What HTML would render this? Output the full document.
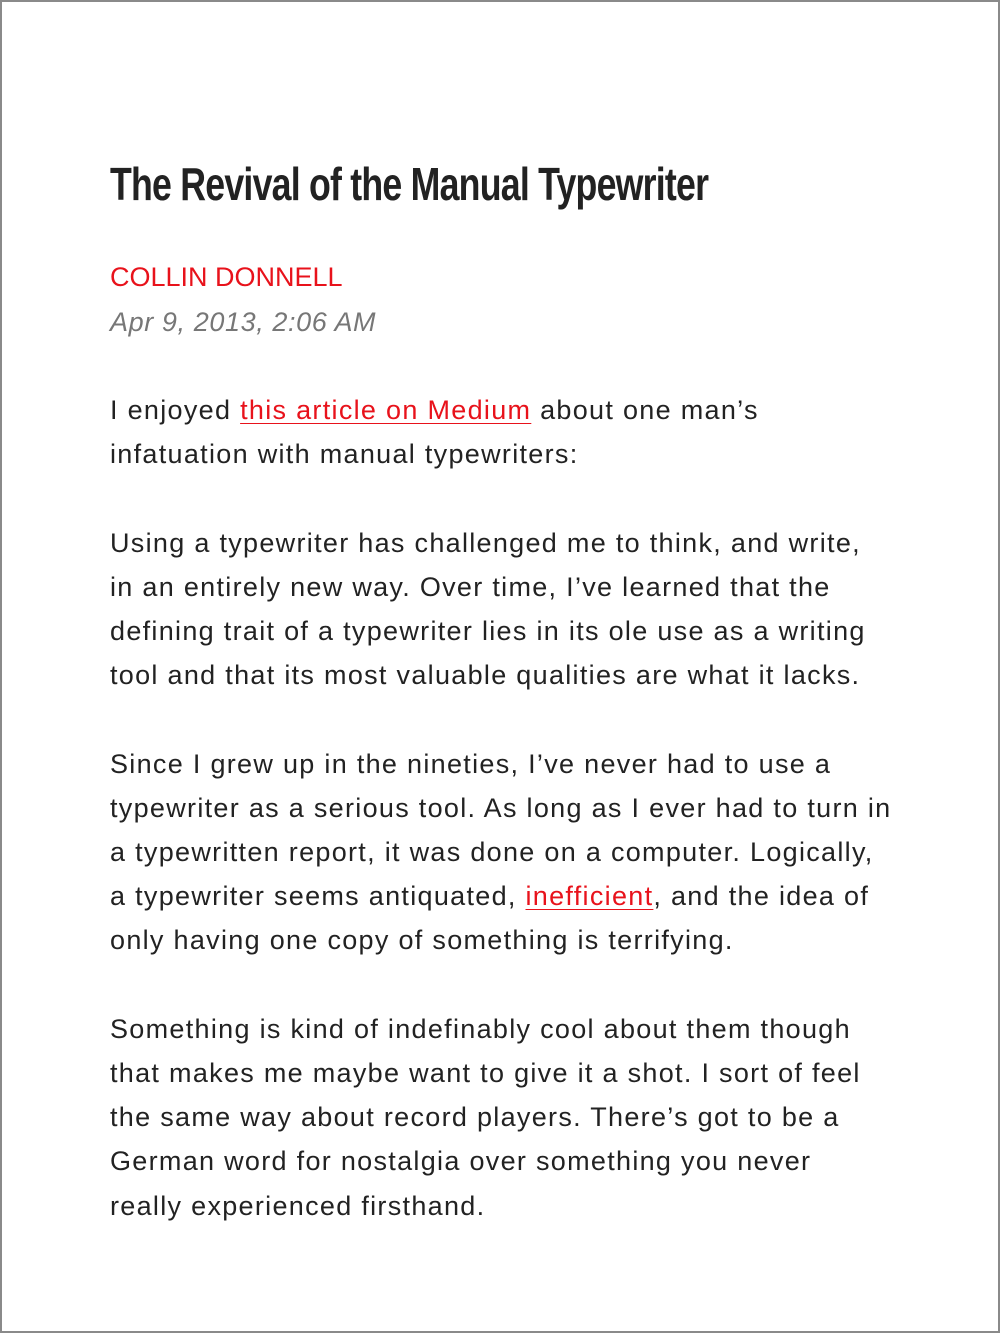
<!DOCTYPE html>
<html><head><meta charset="utf-8"><style>
html,body{margin:0;padding:0;background:#fff}
body{width:1000px;height:1333px;position:relative;overflow:hidden}
.frame{position:absolute;left:0;top:0;width:996px;height:1329px;border:2px solid #8a8a8a}
.t{position:absolute;left:110px;top:157px;font-family:"Liberation Sans",sans-serif;font-weight:bold;font-size:46px;color:#222;white-space:nowrap;letter-spacing:-1px;transform:scaleX(0.776);transform-origin:left top}
.a{position:absolute;left:110px;top:262px;font-family:"Liberation Sans",sans-serif;font-size:27px;color:#e8121b;white-space:nowrap}
.d{position:absolute;left:110px;top:307px;font-family:"Liberation Sans",sans-serif;font-style:italic;font-size:27px;color:#777;white-space:nowrap;letter-spacing:0.6px}
.l{position:absolute;left:110px;height:44px;line-height:44px;font-family:"Liberation Sans",sans-serif;font-size:27px;color:#222;white-space:nowrap;letter-spacing:1.3px}
a{color:#e8121b;text-decoration:underline;text-decoration-thickness:1px;text-underline-offset:4px}
</style></head><body>
<div class="frame"></div>
<div class="t">The Revival of the Manual Typewriter</div>
<div class="a">COLLIN DONNELL</div>
<div class="d">Apr 9, 2013, 2:06 AM</div>
<div class="l" style="top:388px">I enjoyed <a>this article on Medium</a> about one man’s</div>
<div class="l" style="top:432px">infatuation with manual typewriters:</div>
<div class="l" style="top:521px">Using a typewriter has challenged me to think, and write,</div>
<div class="l" style="top:565px">in an entirely new way. Over time, I’ve learned that the</div>
<div class="l" style="top:609px">defining trait of a typewriter lies in its ole use as a writing</div>
<div class="l" style="top:653px">tool and that its most valuable qualities are what it lacks.</div>
<div class="l" style="top:742px">Since I grew up in the nineties, I’ve never had to use a</div>
<div class="l" style="top:786px">typewriter as a serious tool. As long as I ever had to turn in</div>
<div class="l" style="top:830px">a typewritten report, it was done on a computer. Logically,</div>
<div class="l" style="top:874px">a typewriter seems antiquated, <a>inefficient</a>, and the idea of</div>
<div class="l" style="top:918px">only having one copy of something is terrifying.</div>
<div class="l" style="top:1007px">Something is kind of indefinably cool about them though</div>
<div class="l" style="top:1051px">that makes me maybe want to give it a shot. I sort of feel</div>
<div class="l" style="top:1095px">the same way about record players. There’s got to be a</div>
<div class="l" style="top:1139px">German word for nostalgia over something you never</div>
<div class="l" style="top:1184px">really experienced firsthand.</div>
</body></html>
